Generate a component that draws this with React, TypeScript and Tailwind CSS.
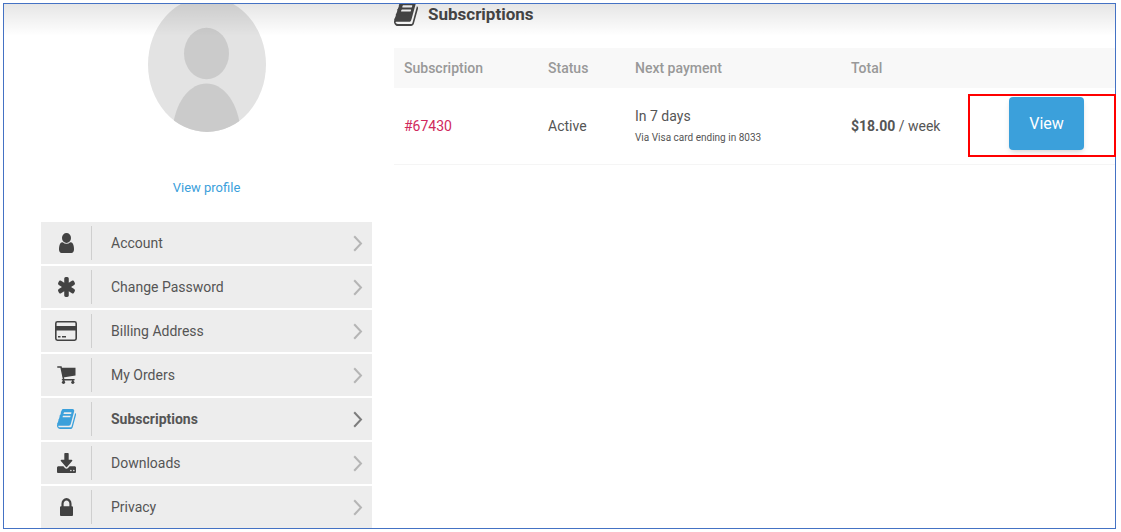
import React from "react";

type IconProps = { className?: string };

const BOOK =
  "M1703 478q40 57 18 129l-275 906q-19 64-76.5 107.5t-122.5 43.5h-923q-77 0-148.5-53.5t-99.5-131.5q-24-67-2-127 0-4 3-27t4-37q1-8-3-21.5t-3-19.5q2-11 8-21t16.5-23.5 16.5-23.5q23-38 45-91.5t30-91.5q3-10 .5-30t-.5-28q3-11 17-28t17-23q21-36 42-92t25-90q1-9-2.5-32t.5-28q4-13 22-30.5t22-22.5q19-26 42.5-84.5t27.5-96.5q1-8-3-25.5t-2-26.5q2-8 9-18t18-23 17-21q8-12 16.5-30.5t15-35 16-36 19.5-32 26.5-23.5 36-11.5 47.5 5.5l-1 3q38-9 51-9h761q74 0 114 56t18 130l-274 906q-36 119-71.5 153.5t-128.5 34.5h-869q-27 0-38 15-11 16-1 43 24 70 144 70h923q29 0 56-15.5t35-41.5l300-987q7-22 5-57 38 15 59 43zm-1064 2q-4 13 2 22.5t20 9.5h608q13 0 25.5-9.5t16.5-22.5l21-64q4-13-2-22.5t-20-9.5h-608q-13 0-25.5 9.5t-16.5 22.5zm-83 256q-4 13 2 22.5t20 9.5h608q13 0 25.5-9.5t16.5-22.5l21-64q4-13-2-22.5t-20-9.5h-608q-13 0-25.5 9.5t-16.5 22.5z";
const USER =
  "M1536 1399q0 109-62.5 187t-150.5 78h-854q-88 0-150.5-78t-62.5-187q0-85 8.5-160.5t31.5-152 58.5-131 94-89 134.5-34.5q131 128 313 128t313-128q76 0 134.5 34.5t94 89 58.5 131 31.5 152 8.5 160.5zm-256-887q0 159-112.5 271.5t-271.5 112.5-271.5-112.5-112.5-271.5 112.5-271.5 271.5-112.5 271.5 112.5 112.5 271.5z";
const ASTERISK =
  "M1546 1050q46 26 59.5 77.5t-12.5 97.5l-64 110q-26 46-77.5 59.5t-97.5-12.5l-266-153v307q0 52-38 90t-90 38h-128q-52 0-90-38t-38-90v-307l-266 153q-46 26-97.5 12.5t-77.5-59.5l-64-110q-26-46-12.5-97.5t59.5-77.5l266-154-266-154q-46-26-59.5-77.5t12.5-97.5l64-110q26-46 77.5-59.5t97.5 12.5l266 153v-307q0-52 38-90t90-38h128q52 0 90 38t38 90v307l266-153q46-26 97.5-12.5t77.5 59.5l64 110q26 46 12.5 97.5t-59.5 77.5l-266 154z";
const DOWNLOAD =
  "M1344 1344q0-26-19-45t-45-19-45 19-19 45 19 45 45 19 45-19 19-45zm256 0q0-26-19-45t-45-19-45 19-19 45 19 45 45 19 45-19 19-45zm128-224v320q0 40-28 68t-68 28h-1472q-40 0-68-28t-28-68v-320q0-40 28-68t68-28h465l135 136q58 56 136 56t136-56l136-136h464q40 0 68 28t28 68zm-325-569q17 41-14 70l-448 448q-18 19-45 19t-45-19l-448-448q-31-29-14-70 17-39 59-39h256v-448q0-26 19-45t45-19h256q26 0 45 19t19 45v448h256q42 0 59 39z";
const LOCK =
  "M640 768h512v-192q0-106-75-181t-181-75-181 75-75 181v192zm832 96v576q0 40-28 68t-68 28h-960q-40 0-68-28t-28-68v-576q0-40 28-68t68-28h32v-192q0-184 132-316t316-132 316 132 132 316v192h32q40 0 68 28t28 68z";

function Glyph({ d, box, className }: { d: string; box: string; className?: string }) {
  return (
    <svg viewBox={box} preserveAspectRatio="none" fill="currentColor" className={className} aria-hidden="true">
      <path d={d} />
    </svg>
  );
}

function CardIcon({ className }: IconProps) {
  return (
    <svg viewBox="0 0 22 20" fill="none" className={className} aria-hidden="true">
      <rect x="0.8" y="0.8" width="20.4" height="18.4" rx="1.6" stroke="currentColor" strokeWidth="1.6" />
      <path d="M1 5h20v4.500H1zM3 15h2.500v1.400H3zM7 15h4v1.400H7z" fill="currentColor" />
    </svg>
  );
}

function CartIcon({ className }: IconProps) {
  return (
    <svg viewBox="0 0 19 18" fill="none" className={className} aria-hidden="true">
      <path d="M0.800 1H4L6.600 13.200M5.500 13.700H17" stroke="currentColor" strokeWidth="1.500" strokeLinecap="round" />
      <path d="M4.300 1.800H18.500V9.600L6 11.400Z" fill="currentColor" />
      <path d="M6 13h1.500v3H6zM15 13h1.500v3H15z" fill="currentColor" />
      <circle cx="6.500" cy="16.300" r="1.600" fill="currentColor" />
      <circle cx="15.800" cy="16.300" r="1.600" fill="currentColor" />
    </svg>
  );
}

function Chevron({ className }: IconProps) {
  return (
    <svg viewBox="0 0 10 17" fill="none" stroke="currentColor" strokeWidth="2" className={className} aria-hidden="true">
      <path d="M1.2 1.2 8 8.5 1.2 15.8" />
    </svg>
  );
}

function Avatar() {
  return (
    <svg viewBox="0 4 118 128" className="h-32 w-[118px]" role="img" aria-label="Profile picture">
      <clipPath id="face">
        <ellipse cx="59" cy="64.500" rx="59" ry="67.500" />
      </clipPath>
      <g clipPath="url(#face)">
        <rect width="118" height="132" fill="#e3e3e3" />
        <ellipse cx="58.5" cy="53.5" rx="22.5" ry="25.8" fill="#cbcbcb" />
        <path d="M25 125C29 99 43 83.500 58.500 83.500S88 99 92 125V133H25Z" fill="#cbcbcb" />
      </g>
    </svg>
  );
}

const items: { label: string; icon: React.ReactNode; active?: boolean }[] = [
  { label: "Account", icon: <Glyph d={USER} box="256 128 1280 1536" className="h-5 w-[15px]" /> },
  { label: "Change Password", icon: <Glyph d={ASTERISK} box="178 128 1436 1536" className="h-5 w-[17px]" /> },
  { label: "Billing Address", icon: <CardIcon className="h-5 w-[22px]" /> },
  { label: "My Orders", icon: <CartIcon className="h-[18px] w-[19px]" /> },
  { label: "Subscriptions", icon: <Glyph d={BOOK} box="64 128 1664 1536" className="h-5 w-[19px]" />, active: true },
  { label: "Downloads", icon: <Glyph d={DOWNLOAD} box="64 0 1664 1536" className="h-5 w-[19px]" /> },
  { label: "Privacy", icon: <Glyph d={LOCK} box="320 128 1152 1408" className="h-[18px] w-[13px]" /> },
];

export default function App() {
  return (
    <div className="min-h-screen bg-white pt-[3px] pr-[5px] pb-[3px] pl-[3px] font-['Roboto',sans-serif] text-sm text-[#555]">
      <div className="relative flex gap-[22px] border border-[#4472c4] pl-[37px]">
        <div className="pointer-events-none absolute inset-x-0 top-0 h-8 bg-linear-to-b from-black/10 to-transparent" />

        <aside className="flex w-[331px] shrink-0 flex-col items-center">
          <Avatar />
          <a href="#profile" className="mt-[46px] text-[13px] leading-5 text-[#3ba0db]">
            View profile
          </a>
          <nav className="mt-6 flex w-full flex-col gap-0.5">
            {items.map((item) => (
              <a key={item.label} href="#account" className="flex h-[42px] items-center bg-[#ededed] pr-[9px]">
                <span
                  className={
                    "flex h-[34px] w-[51px] shrink-0 items-center justify-center border-r border-[#cfcfcf] " +
                    (item.active ? "text-[#3ba0db]" : "text-[#424242]")
                  }
                >
                  {item.icon}
                </span>
                <span className={"ml-[19px] flex-1 " + (item.active ? "font-bold" : "")}>{item.label}</span>
                <Chevron className={"h-[17px] w-[10px] " + (item.active ? "text-[#7d7d7d]" : "text-[#b5b5b5]")} />
              </a>
            ))}
          </nav>
        </aside>

        <main className="min-w-0 flex-1">
          <h1 className="flex h-11 items-start gap-[10px] text-[17px] leading-5 font-bold text-[#484848]">
            <Glyph d={BOOK} box="64 300 1664 1364" className="h-[22px] w-6" />
            Subscriptions
          </h1>
          <table className="w-full table-fixed text-left">
            <colgroup>
              <col className="w-[144px]" />
              <col className="w-[87px]" />
              <col className="w-[216px]" />
              <col className="w-[127px]" />
              <col />
            </colgroup>
            <thead>
              <tr className="h-10 bg-[#f8f8f8] text-[#999]">
                <th className="px-[10px] font-medium">Subscription</th>
                <th className="px-[10px] font-medium">Status</th>
                <th className="px-[10px] font-medium">Next payment</th>
                <th className="px-[10px] font-medium">Total</th>
                <th aria-label="Actions" />
              </tr>
            </thead>
            <tbody>
              <tr className="h-[76px] border-b border-[#f5f5f5]">
                <td className="px-[10px]">
                  <a href="#67430" className="text-[#d0285c]">
                    #67430
                  </a>
                </td>
                <td className="px-[10px]">Active</td>
                <td className="pl-[10px]">
                  <div className="leading-6">In 7 days</div>
                  <div className="text-[10px] leading-5">Via Visa card ending in 8033</div>
                </td>
                <td className="pl-[10px] whitespace-nowrap">
                  <strong className="font-bold">$18.00</strong> / week
                </td>
                <td className="relative pr-[31px] pb-1 text-right">
                  <button
                    type="button"
                    className="h-[53px] w-[75px] rounded bg-[#3ba0db] text-base text-white shadow-md"
                  >
                    View
                  </button>
                  <span className="pointer-events-none absolute top-[6px] -right-px bottom-[7px] left-0 border-2 border-[#f00]" />
                </td>
              </tr>
            </tbody>
          </table>
        </main>
      </div>
    </div>
  );
}
